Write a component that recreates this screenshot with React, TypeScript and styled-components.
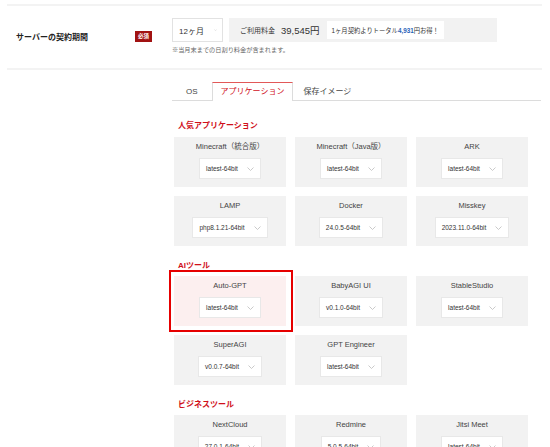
import React from 'react';
import styled, { createGlobalStyle } from 'styled-components';

const GlobalStyle = createGlobalStyle`
    html, body {
        margin: 0;
        padding: 0;
        background: #fff;
    }
    body {
        font-family: "Liberation Sans", "Noto Sans CJK JP", sans-serif;
        color: #333;
        width: 550px;
        overflow: hidden;
    }
`;

const Page = styled.div`
    padding: 4px 8px 0 7px;
`;

const ContractRow = styled.div`
    display: grid;
    grid-template-columns: 119px 17px 1fr;
    align-items: center;
    border-top: 2px solid #f3f3f3;
    border-bottom: 2px solid #f3f3f3;
    padding: 12px 0 14px 9px;
`;

const RowLabel = styled.div`
    font-size: 8px;
    font-weight: 700;
    color: #222;
    white-space: nowrap;
`;

const Badge = styled.span`
    display: flex;
    align-items: center;
    justify-content: center;
    height: 11px;
    background: #a11212;
    color: #fff;
    font-size: 5.5px;
    font-weight: 700;
`;

const RowBody = styled.div`
    display: flex;
    flex-direction: column;
    gap: 3px;
    margin-left: 20px;
`;

const Controls = styled.div`
    display: flex;
    gap: 6px;
`;

const Select = styled.div<{ small?: boolean }>`
    display: inline-flex;
    align-items: center;
    justify-content: space-between;
    box-sizing: border-box;
    background: #fff;
    border: 1px solid ${p => (p.small ? '#e8e8e8' : '#e2e2e2')};
    height: ${p => (p.small ? '21px' : '24px')};
    padding: ${p => (p.small ? '0 6px' : '0 5px 0 6px')};
    gap: ${p => (p.small ? '9px' : '10px')};
    font-size: ${p => (p.small ? '6.5px' : '8px')};
    color: #333;
    white-space: nowrap;
    width: ${p => (p.small ? 'auto' : '51px')};
`;

const PriceBox = styled.div`
    display: flex;
    align-items: center;
    width: 268px;
    height: 24px;
    box-sizing: border-box;
    background: #f2f2f2;
    padding-left: 11px;
`;

const PriceLabel = styled.span`
    font-size: 7px;
    color: #333;
    margin-right: 6px;
`;

const PriceValue = styled.span`
    font-size: 9.5px;
    color: #333;
    margin-right: 7px;
`;

const Deal = styled.span`
    display: flex;
    align-items: center;
    height: 18px;
    background: #fff;
    padding: 0 5px;
    font-size: 6.3px;
    color: #333;
    white-space: nowrap;
    b {
        color: #2a62b8;
        font-weight: 700;
    }
`;

const Note = styled.div`
    font-size: 6.2px;
    color: #666;
    line-height: 9px;
    white-space: nowrap;
`;

const Content = styled.div`
    margin: 12px 1px 0 165px;
`;

const TabBar = styled.div`
    display: flex;
    align-items: flex-start;
    border-bottom: 1px solid #dcdcdc;
    height: 18px;
`;

const Tab = styled.div<{ active?: boolean; pad: number }>`
    box-sizing: border-box;
    height: ${p => (p.active ? '19px' : '18px')};
    line-height: 17px;
    padding: 0 ${p => p.pad}px;
    font-size: 8px;
    color: ${p => (p.active ? '#d0101a' : '#444')};
    background: ${p => (p.active ? '#fff' : 'transparent')};
    border: 1px solid ${p => (p.active ? '#dcdcdc' : 'transparent')};
    border-top-color: ${p => (p.active ? '#e25858' : 'transparent')};
    border-bottom: none;
    white-space: nowrap;
`;

const Section = styled.section<{ first?: boolean }>`
    margin: ${p => (p.first ? '19px' : '14px')} 0 0 2px;
    width: 354px;
`;

const Heading = styled.h3<{ first?: boolean }>`
    margin: 0 0 ${p => (p.first ? '5px' : '4px')} 4px;
    font-size: 8px;
    line-height: 12px;
    font-weight: 700;
    color: #d0101a;
`;

const CardGrid = styled.div`
    display: grid;
    grid-template-columns: repeat(3, 112px);
    gap: 9px;
`;

const Card = styled.div<{ selected?: boolean }>`
    position: relative;
    display: flex;
    flex-direction: column;
    align-items: center;
    height: 50px;
    box-sizing: border-box;
    padding-top: 5px;
    background: ${p => (p.selected ? '#fcefef' : '#f2f2f2')};

    ${p =>
        p.selected &&
        `
        &::after {
            content: '';
            position: absolute;
            top: -6px;
            left: -5px;
            right: -7px;
            bottom: -6px;
            border: 2px solid #e60000;
        }
    `}
`;

const CardTitle = styled.div`
    font-size: 7.5px;
    line-height: 10px;
    color: #444;
    margin-bottom: 6px;
    white-space: nowrap;
`;

const Chevron = () => (
    <svg width="7" height="4" viewBox="0 0 7 4">
        <polyline
            points="0.5,0.5 3.5,3.5 6.5,0.5"
            fill="none"
            stroke="#bdbdbd"
            strokeWidth="0.8"
        />
    </svg>
);

interface IApp {
    name: string;
    version: string;
    selected?: boolean;
}

const sections: { title: string; apps: IApp[] }[] = [
    {
        title: '人気アプリケーション',
        apps: [
            { name: 'Minecraft（統合版）', version: 'latest-64bit' },
            { name: 'Minecraft（Java版）', version: 'latest-64bit' },
            { name: 'ARK', version: 'latest-64bit' },
            { name: 'LAMP', version: 'php8.1.21-64bit' },
            { name: 'Docker', version: '24.0.5-64bit' },
            { name: 'Misskey', version: '2023.11.0-64bit' },
        ],
    },
    {
        title: 'AIツール',
        apps: [
            { name: 'Auto-GPT', version: 'latest-64bit', selected: true },
            { name: 'BabyAGI UI', version: 'v0.1.0-64bit' },
            { name: 'StableStudio', version: 'latest-64bit' },
            { name: 'SuperAGI', version: 'v0.0.7-64bit' },
            { name: 'GPT Engineer', version: 'latest-64bit' },
        ],
    },
    {
        title: 'ビジネスツール',
        apps: [
            { name: 'NextCloud', version: '27.0.1-64bit' },
            { name: 'Redmine', version: '5.0.5-64bit' },
            { name: 'Jitsi Meet', version: 'latest-64bit' },
        ],
    },
];

const App = () => (
    <>
        <GlobalStyle />
        <Page>
            <ContractRow>
                <RowLabel>サーバーの契約期間</RowLabel>
                <Badge>必須</Badge>
                <RowBody>
                    <Controls>
                        <Select>
                            12ヶ月
                            <Chevron />
                        </Select>
                        <PriceBox>
                            <PriceLabel>ご利用料金</PriceLabel>
                            <PriceValue>39,545円</PriceValue>
                            <Deal>
                                1ヶ月契約よりトータル<b>4,931</b>円お得！
                            </Deal>
                        </PriceBox>
                    </Controls>
                    <Note>※当月末までの日割り料金が含まれます。</Note>
                </RowBody>
            </ContractRow>

            <Content>
                <TabBar>
                    <Tab pad={13}>OS</Tab>
                    <Tab pad={8} active>
                        アプリケーション
                    </Tab>
                    <Tab pad={9}>保存イメージ</Tab>
                </TabBar>

                {sections.map((section, i) => (
                    <Section key={section.title} first={i === 0}>
                        <Heading first={i === 0}>{section.title}</Heading>
                        <CardGrid>
                            {section.apps.map(app => (
                                <Card key={app.name} selected={app.selected}>
                                    <CardTitle>{app.name}</CardTitle>
                                    <Select small>
                                        {app.version}
                                        <Chevron />
                                    </Select>
                                </Card>
                            ))}
                        </CardGrid>
                    </Section>
                ))}
            </Content>
        </Page>
    </>
);

export default App;
